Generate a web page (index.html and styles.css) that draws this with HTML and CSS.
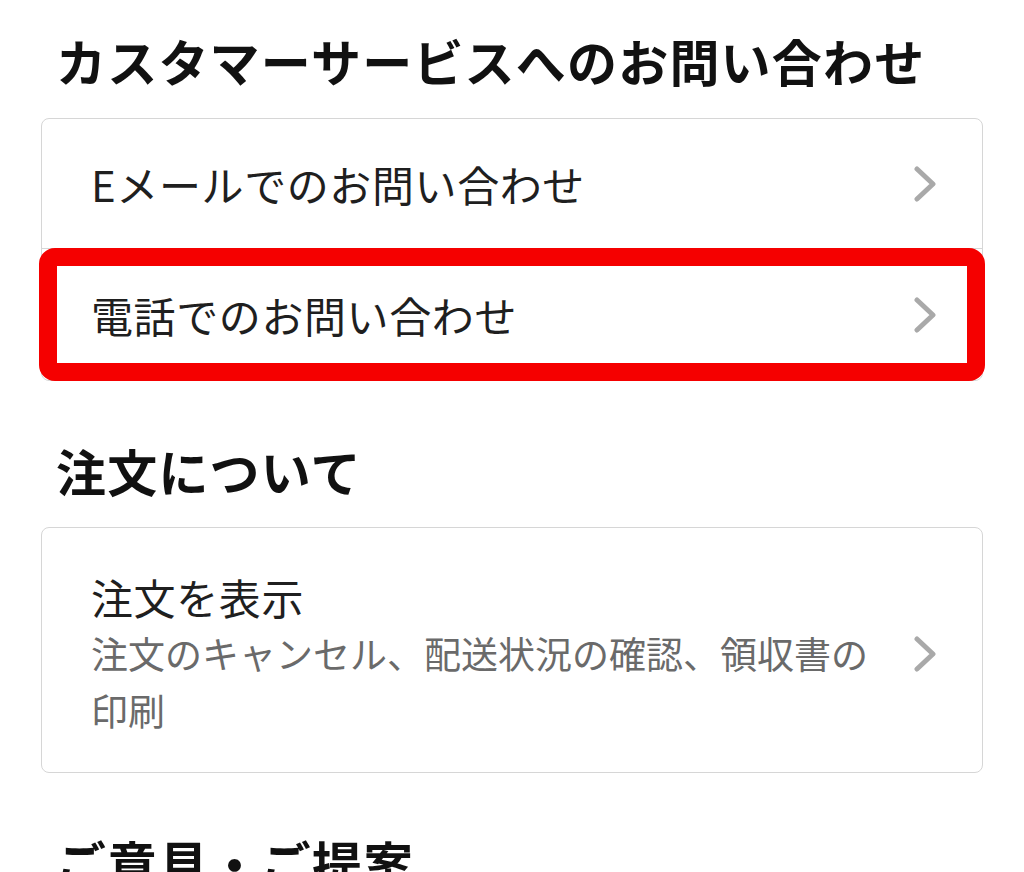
FILE: index.html
```html
<!DOCTYPE html>
<html lang="ja">
<head>
    <meta charset="UTF-8">
    <meta name="viewport" content="width=device-width, initial-scale=1.0">
    <title>カスタマーサービス</title>
    <link rel="stylesheet" href="styles.css">
</head>
<body>
    <div class="page">
        <h2 class="section-title first">カスタマーサービスへのお問い合わせ</h2>
        <div class="card">
            <div class="row">
                <span class="row-text">Eメールでのお問い合わせ</span>
                <svg class="chevron" width="22" height="36" viewBox="0 0 22 36"><polyline points="3,3 19,18 3,33" /></svg>
            </div>
            <div class="row marked">
                <span class="row-text">電話でのお問い合わせ</span>
                <svg class="chevron" width="22" height="36" viewBox="0 0 22 36"><polyline points="3,3 19,18 3,33" /></svg>
            </div>
        </div>

        <h2 class="section-title">注文について</h2>
        <div class="card">
            <div class="row tall">
                <div class="row-body">
                    <div class="row-text">注文を表示</div>
                    <div class="row-sub">注文のキャンセル、配送状況の確認、領収書の印刷</div>
                </div>
                <svg class="chevron" width="22" height="36" viewBox="0 0 22 36"><polyline points="3,3 19,18 3,33" /></svg>
            </div>
        </div>

        <h2 class="section-title">ご意見・ご提案</h2>
    </div>
</body>
</html>
```

FILE: styles.css
```css
body {
    font-family: "Noto Sans CJK JP", "Noto Sans", sans-serif;
    background-color: #ffffff;
    color: #1a1a1a;
    margin: 0;
    padding: 0;
    text-spacing-trim: space-all;
}
.page {
    padding: 0 41px;
}
.section-title {
    font-size: 50px;
    font-weight: bold;
    line-height: 72px;
    letter-spacing: 1.2px;
    color: #111;
    margin: 53px 0 21px 15px;
}
.section-title.first {
    margin-top: 24px;
    margin-bottom: 22px;
}
.card {
    border: 1px solid #d6d6d6;
    border-radius: 8px;
    background: white;
}
.row {
    position: relative;
    display: flex;
    align-items: center;
    height: 129px;
    padding: 0 46px 0 49px;
}
.row + .row {
    border-top: 1px solid #d6d6d6;
    height: 131px;
}
.row.tall {
    height: auto;
    padding-top: 40px;
    padding-bottom: 33px;
}
/* red annotation frame */
.row.marked::after {
    content: "";
    position: absolute;
    top: -1px;
    left: -3px;
    right: -3px;
    bottom: -1px;
    border: 18px solid #f50000;
    border-radius: 16px;
}
.row-text {
    flex: 1;
    font-size: 42px;
    line-height: 57px;
    letter-spacing: 0.6px;
    color: #1f1f1f;
}
.row-body {
    flex: 1;
    padding-right: 16px;
}
.row-sub {
    font-size: 37px;
    line-height: 57px;
    color: #6a6a6a;
}
.chevron {
    flex: none;
}
.chevron polyline {
    fill: none;
    stroke: #a9a9a9;
    stroke-width: 5;
    stroke-linecap: round;
    stroke-linejoin: round;
}
```
